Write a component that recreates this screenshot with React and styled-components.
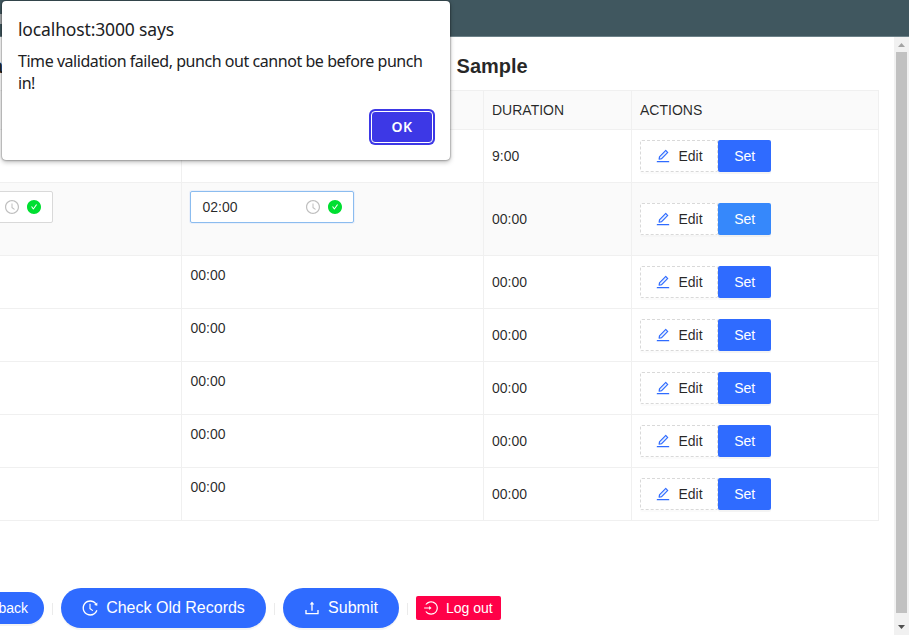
import React from "react";
import styled, { createGlobalStyle } from "styled-components";
import {
  AiTwotoneEdit, AiOutlineClockCircle, AiFillCheckCircle,
  AiOutlineHistory, AiOutlineUpload, AiOutlineLogin,
} from "react-icons/ai";

const GlobalStyle = createGlobalStyle`
  * { box-sizing: border-box; }
  body { margin: 0; overflow: hidden; background: #fff; }
  button { font-family: inherit; cursor: pointer; }
`;

const Page = styled.div`
  position: relative;
  display: flex;
  flex-direction: column;
  width: 909px;
  height: 635px;
  overflow: hidden;
  font: 14px/22px "Liberation Sans", Arial, sans-serif;
  color: rgba(0, 0, 0, 0.85);
`;

const TopBar = styled.header`
  flex: none;
  height: 37px;
  padding-top: 14px;
  background: #40575f;
  border-bottom: 1px solid #6c8188;
`;

const NavItem = styled.div`
  width: 30px;
  height: 10px;
  background: #a9adaf;
`;

const Body = styled.div`
  flex: 1;
  display: flex;
  min-height: 0;
`;

const Main = styled.main`
  flex: 1;
  display: flex;
  flex-direction: column;
`;

const Title = styled.h1`
  display: flex;
  align-items: flex-start;
  margin: 0;
  height: 53px;
  padding-top: 15px;
  font-size: 20px;
  line-height: 28px;
  font-weight: 700;
`;

const TitleStart = styled.span`
  width: 457px;
  margin-left: -8px;
`;

const StatusDot = styled.span`
  flex: none;
  width: 5px;
  height: 5px;
  margin: 18px 6px 0 -9px;
  border-radius: 50%;
  background: #6fd6cf;
`;

const Table = styled.div`
  width: 879px;
  height: 431px;
  border-top: 1px solid #f0f0f0;
  border-right: 1px solid #f0f0f0;
`;

const Row = styled.div`
  display: grid;
  grid-template-columns: 182px 302px 148px 1fr;
  height: ${(p) => p.$height}px;
  background: ${(p) => (p.$shaded ? "#fafafa" : "#fff")};
`;

const Cell = styled.div`
  display: flex;
  align-items: ${(p) => (p.$top ? "flex-start" : "center")};
  padding: ${(p) => (p.$top ? "8px" : "0 8px")};
  border-bottom: 1px solid #f0f0f0;
  border-right: 1px solid #f0f0f0;
  &:last-child { border-right: 0; }
`;

const TimeText = styled.span`
  padding-left: 0.5px;
`;

const TimeField = styled.div`
  display: flex;
  align-items: center;
  gap: 8px;
  flex: none;
  width: 164px;
  height: 32px;
  margin-left: ${(p) => p.$shift || 0}px;
  padding: 0 11px;
  border: 1px solid ${(p) => (p.$focused ? "#8bbcef" : "#d9d9d9")};
  border-radius: 2px;
  background: #fff;
  box-shadow: ${(p) => (p.$focused ? "0 0 0 1px rgba(47, 107, 255, 0.07)" : "none")};
  svg { flex: none; width: 14px; height: 14px; }
`;

const FieldValue = styled.span`
  flex: 1;
  padding-left: 0.5px;
`;

/* The glyphs are drawn in the middle 896 units of their 1024 unit box. */
const tight = { viewBox: "64 64 896 896" };

const ClockIcon = styled(AiOutlineClockCircle).attrs(tight)`
  color: #bfbfbf;
`;

const ValidIcon = styled(AiFillCheckCircle).attrs(tight)`
  color: #00df31;
`;

const EditButton = styled.button`
  display: flex;
  align-items: center;
  gap: 8.5px;
  width: 78px;
  height: 32px;
  padding: 0 0 0 15px;
  border: 1px dashed #d9d9d9;
  border-radius: 2px;
  background: #fff;
  color: inherit;
  font-size: 14px;
  box-shadow: 0 2px 0 rgba(0, 0, 0, 0.015);
`;

const PenIcon = styled(AiTwotoneEdit).attrs(tight)`
  width: 14px;
  height: 14px;
  color: #2f6bff;
  path[fill="#D9D9D9"] { fill: #e6f0ff; }
`;

const SetButton = styled.button`
  width: 53px;
  height: 32px;
  padding: 0 0 0 0.5px;
  border: 0;
  border-radius: 2px;
  background: ${(p) => (p.$hovered ? "#3688fb" : "#2f6bff")};
  color: #fff;
  font-size: 14px;
  box-shadow: 0 2px 0 rgba(0, 0, 0, 0.045);
`;

const Footer = styled.footer`
  display: flex;
  align-items: center;
  height: 40px;
  margin-top: 67px;
`;

const Pill = styled.button`
  display: flex;
  align-items: center;
  justify-content: center;
  gap: 8px;
  width: ${(p) => p.$width}px;
  height: 40px;
  padding: 0;
  border: 0;
  border-radius: 40px;
  background: #2f6bff;
  color: #fff;
  font-size: 16px;
  box-shadow: 0 2px 0 rgba(0, 0, 0, 0.045);
  svg { width: 16px; height: 16px; }
`;

const BackButton = styled(Pill)`
  justify-content: flex-end;
  height: 32px;
  padding-right: 16px;
  border-radius: 0 32px 32px 0;
  font-size: 14px;
`;

const LogoutButton = styled.button`
  display: flex;
  align-items: center;
  gap: 8px;
  width: 85px;
  height: 24px;
  padding: 0 8px;
  border: 0;
  border-radius: 2px;
  background: #ff0048;
  color: #fff;
  font-size: 14px;
  white-space: nowrap;
  svg { flex: none; width: 14px; height: 14px; }
`;

const Divider = styled.span`
  width: 1px;
  height: 12px;
  margin: 1px 8px 0;
  background: #ebebeb;
`;

const Scrollbar = styled.aside`
  display: flex;
  flex-direction: column;
  align-items: center;
  width: 15px;
  height: 598px;
  background: #f1f1f1;
`;

const ScrollThumb = styled.div`
  width: 11px;
  height: 561px;
  background: #c1c1c1;
`;

const ScrollArrow = styled.svg`
  display: block;
  width: 15px;
  height: ${(p) => p.$height}px;
  fill: ${(p) => p.$tone};
`;

const Dialog = styled.section`
  position: absolute;
  left: 2px;
  top: 1px;
  width: 448px;
  height: 159px;
  display: flex;
  flex-direction: column;
  padding: 16px;
  border-radius: 4px;
  background: #fff;
  color: #202124;
  box-shadow: 0 0 2px rgba(0, 0, 0, 0.65), 0 2px 5px rgba(0, 0, 0, 0.28);
  font-family: "Noto Sans", sans-serif;
`;

const DialogTitle = styled.h2`
  margin: 0;
  font-size: 17.5px;
  line-height: 24px;
  font-weight: 400;
  letter-spacing: -0.14px;
`;

const DialogMessage = styled.p`
  width: 414px;
  margin: 9px 0 0;
  font-size: 16px;
  line-height: 22px;
  letter-spacing: -0.45px;
`;

const OkButton = styled.button`
  align-self: flex-end;
  width: 62px;
  height: 32px;
  margin: 17px 1px 0 0;
  padding: 0 0 2px;
  border: 1px solid #fff;
  border-radius: 4px;
  background: #3d38e6;
  color: #fff;
  font-size: 14px;
  font-weight: 600;
  letter-spacing: 0.4px;
  box-shadow: 0 0 0 2px #3d38e6;
`;

const rows = [
  { height: 53, out: "", duration: "9:00" },
  { height: 73, field: "02:00", duration: "00:00", active: true },
  ...Array.from({ length: 5 }, () => ({ height: 53, out: "00:00", duration: "00:00" })),
];

function TimeInput({ value, focused, shift }) {
  return (
    <TimeField $focused={focused} $shift={shift}>
      <FieldValue>{value}</FieldValue>
      <ClockIcon />
      <ValidIcon />
    </TimeField>
  );
}

function PunchRow({ row }) {
  return (
    <Row $height={row.height} $shaded={row.active}>
      <Cell $top>{row.active && <TimeInput shift={-119} />}</Cell>
      <Cell $top>
        {row.active ? <TimeInput value={row.field} focused /> : <TimeText>{row.out}</TimeText>}
      </Cell>
      <Cell>{row.duration}</Cell>
      <Cell>
        <EditButton><PenIcon />Edit</EditButton>
        <SetButton $hovered={row.active}>Set</SetButton>
      </Cell>
    </Row>
  );
}

export default function App() {
  return (
    <Page>
      <GlobalStyle />
      <TopBar><NavItem /></TopBar>
      <Body>
        <Main>
          <Title>
            <TitleStart>a</TitleStart>
            <StatusDot />
            <span>&nbsp;Sample</span>
          </Title>
          <Table>
            <Row $height={39} $shaded>
              <Cell /><Cell /><Cell>DURATION</Cell><Cell>ACTIONS</Cell>
            </Row>
            {rows.map((row, i) => <PunchRow key={i} row={row} />)}
          </Table>
          <Footer>
            <BackButton $width={44}>back</BackButton>
            <Divider />
            <Pill $width={205}><AiOutlineHistory {...tight} />Check Old Records</Pill>
            <Divider />
            <Pill $width={116}><AiOutlineUpload {...tight} />Submit</Pill>
            <Divider />
            <LogoutButton><AiOutlineLogin {...tight} />Log out</LogoutButton>
          </Footer>
        </Main>
        <Scrollbar>
          <ScrollArrow $height={15} $tone="#a3a3a3" viewBox="0 0 15 15"><path d="M4 10L7.5 6L11 10Z" /></ScrollArrow>
          <ScrollThumb />
          <ScrollArrow $height={22} $tone="#505050" viewBox="0 0 15 22"><path d="M4 12L7.5 16L11 12Z" /></ScrollArrow>
        </Scrollbar>
      </Body>
      <Dialog role="alertdialog">
        <DialogTitle>localhost:3000 says</DialogTitle>
        <DialogMessage>Time validation failed, punch out cannot be before punch in!</DialogMessage>
        <OkButton>OK</OkButton>
      </Dialog>
    </Page>
  );
}
